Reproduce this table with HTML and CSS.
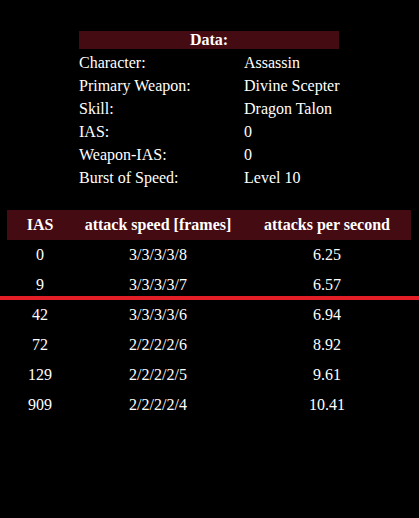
FILE: index.html
```html
<!DOCTYPE html>
<html>
<head>
<meta charset="utf-8">
<link rel="stylesheet" href="styles.css">
</head>
<body>
<section class="data">
  <div class="data-head">Data:</div>
  <div class="data-rows">
    <div class="lbl">Character:</div><div class="val">Assassin</div>
    <div class="lbl">Primary Weapon:</div><div class="val">Divine Scepter</div>
    <div class="lbl">Skill:</div><div class="val">Dragon Talon</div>
    <div class="lbl">IAS:</div><div class="val">0</div>
    <div class="lbl">Weapon-IAS:</div><div class="val">0</div>
    <div class="lbl">Burst of Speed:</div><div class="val">Level 10</div>
  </div>
</section>
<section class="speed">
  <div class="row head">
    <div>IAS</div><div>attack speed [frames]</div><div>attacks per second</div>
  </div>
  <div class="row"><div>0</div><div>3/3/3/3/8</div><div>6.25</div></div>
  <div class="row mark"><div>9</div><div>3/3/3/3/7</div><div>6.57</div></div>
  <div class="row"><div>42</div><div>3/3/3/3/6</div><div>6.94</div></div>
  <div class="row"><div>72</div><div>2/2/2/2/6</div><div>8.92</div></div>
  <div class="row"><div>129</div><div>2/2/2/2/5</div><div>9.61</div></div>
  <div class="row"><div>909</div><div>2/2/2/2/4</div><div>10.41</div></div>
</section>
</body>
</html>
```
FILE: styles.css
```css
html, body {
  margin: 0;
  padding: 0;
  background: #000;
}
body {
  color: #fff;
  font-family: "Liberation Serif", "Times New Roman", serif;
  font-size: 16px;
  line-height: 18px;
  padding-top: 31px;
}
.data {
  margin-left: 79px;
  width: 260px;
}
.data-head {
  background: #450b12;
  height: 18px;
  font-weight: bold;
  text-align: center;
}
.data-rows {
  margin-top: 2px;
  display: grid;
  grid-template-columns: 165px 95px;
  grid-auto-rows: 23px;
  align-items: center;
}
.lbl, .val {
  white-space: nowrap;
}
.speed {
  margin: 21px 8px 0 7px;
}
.row {
  display: grid;
  grid-template-columns: 66px 170px 168px;
  height: 30px;
  align-items: center;
  text-align: center;
  position: relative;
}
.row.head {
  background: #450b12;
  font-weight: bold;
}
.row.mark::after {
  content: "";
  position: absolute;
  left: -7px;
  right: -8px;
  bottom: 0;
  height: 4px;
  background: #e31e26;
}
```
